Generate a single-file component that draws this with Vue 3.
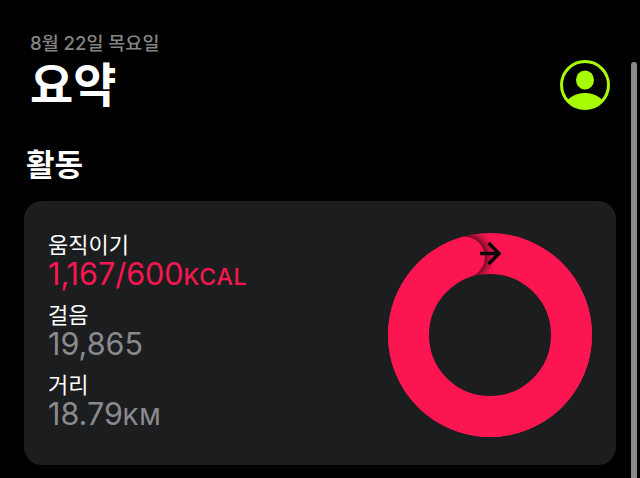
<script setup>
const stats = [
  { label: '움직이기', value: '1,167/600', unit: 'KCAL', accent: true },
  { label: '걸음', value: '19,865', unit: '', accent: false },
  { label: '거리', value: '18.79', unit: 'KM', accent: false },
]
</script>

<template>
  <div class="screen">
    <header class="top">
      <div>
        <div class="date">8월 22일 목요일</div>
        <h1 class="title">요약</h1>
      </div>
      <svg class="avatar" width="52" height="52" viewBox="0 0 52 52">
        <defs>
          <clipPath id="avatar-clip"><circle cx="26" cy="26" r="23" /></clipPath>
        </defs>
        <circle cx="26" cy="26" r="23.5" fill="none" stroke="#a6fb05" stroke-width="3" />
        <ellipse cx="26" cy="21" rx="9" ry="9.500" fill="#a6fb05" />
        <ellipse cx="26" cy="50" rx="21" ry="16" fill="#a6fb05" clip-path="url(#avatar-clip)" />
      </svg>
    </header>

    <h2 class="section">활동</h2>

    <section class="card">
      <div class="stats">
        <div v-for="s in stats" :key="s.label" class="stat">
          <div class="label">{{ s.label }}</div>
          <div class="value" :class="{ accent: s.accent }">{{ s.value }}<span class="unit">{{ s.unit }}</span></div>
        </div>
      </div>
      <svg class="ring" width="206" height="206" viewBox="0 0 206 206">
        <defs>
          <clipPath id="ring-clip">
            <path clip-rule="evenodd" d="M103 1a102 102 0 1 0 .01 0zM103 42a61 61 0 1 1-.01 0z" />
          </clipPath>
          <filter id="cap-blur" x="-60%" y="-60%" width="220%" height="220%">
            <feGaussianBlur stdDeviation="5" />
          </filter>
        </defs>
        <circle cx="103" cy="103" r="81.500" fill="none" stroke="#fb1651" stroke-width="41" />
        <g clip-path="url(#ring-clip)">
          <circle cx="78" cy="25" r="23" fill="#000" opacity=".75" filter="url(#cap-blur)" />
          <path d="M161 45A82 82 0 1 1 77.400 25.100" fill="none" stroke="#fb1651" stroke-width="41" stroke-linecap="round" />
        </g>
        <path d="M93 21.500h18M101.500 11 112 21.500 101.500 32" fill="none" stroke="#0a0508" stroke-width="3.500" />
      </svg>
    </section>

    <div class="scrollbar"></div>
  </div>
</template>

<style>
html, body { margin: 0; background: #000; }
</style>

<style scoped>
.screen {
  position: relative;
  box-sizing: border-box;
  width: 640px;
  height: 478px;
  overflow: hidden;
  padding: 31px 24px 0 24px;
  background: #000;
  color: #fff;
  font-family: Inter, "Noto Sans CJK KR", sans-serif;
}
.top {
  display: flex;
  justify-content: space-between;
  align-items: flex-start;
  padding-left: 6px;
}
.date {
  font-size: 18.500px;
  line-height: 25px;
  font-weight: 500;
  color: #858585;
}
.title {
  margin: 0;
  font-size: 47px;
  line-height: 58px;
  font-weight: 700;
}
.avatar {
  display: block;
  margin-top: 28px;
  margin-right: 5px;
}
.section {
  margin: 31px 0 0 2px;
  font-size: 31px;
  line-height: 40px;
  font-weight: 700;
}
.card {
  display: flex;
  justify-content: space-between;
  align-items: center;
  box-sizing: border-box;
  height: 264px;
  margin-top: 16px;
  width: 592px;
  padding: 0 23px 0 24px;
  background: #1c1d1f;
  border-radius: 18px;
}
.stats {
  display: flex;
  flex-direction: column;
  gap: 10px;
  margin-top: -3px;
}
.label {
  font-size: 22px;
  line-height: 27px;
  color: #fff;
}
.value {
  font-size: 30.500px;
  line-height: 30px;
  font-weight: 400;
  color: #8a8a8e;
}
.value.accent { color: #fb1651; }
.unit {
  font-size: 23px;
  font-weight: 500;
  letter-spacing: 0.8px;
}
.ring { display: block; margin-top: 4px; }
.scrollbar {
  position: absolute;
  left: 631px;
  top: 62px;
  bottom: 0;
  width: 6px;
  border-radius: 3px 3px 0 0;
  background: #8a8a8a;
}
</style>
